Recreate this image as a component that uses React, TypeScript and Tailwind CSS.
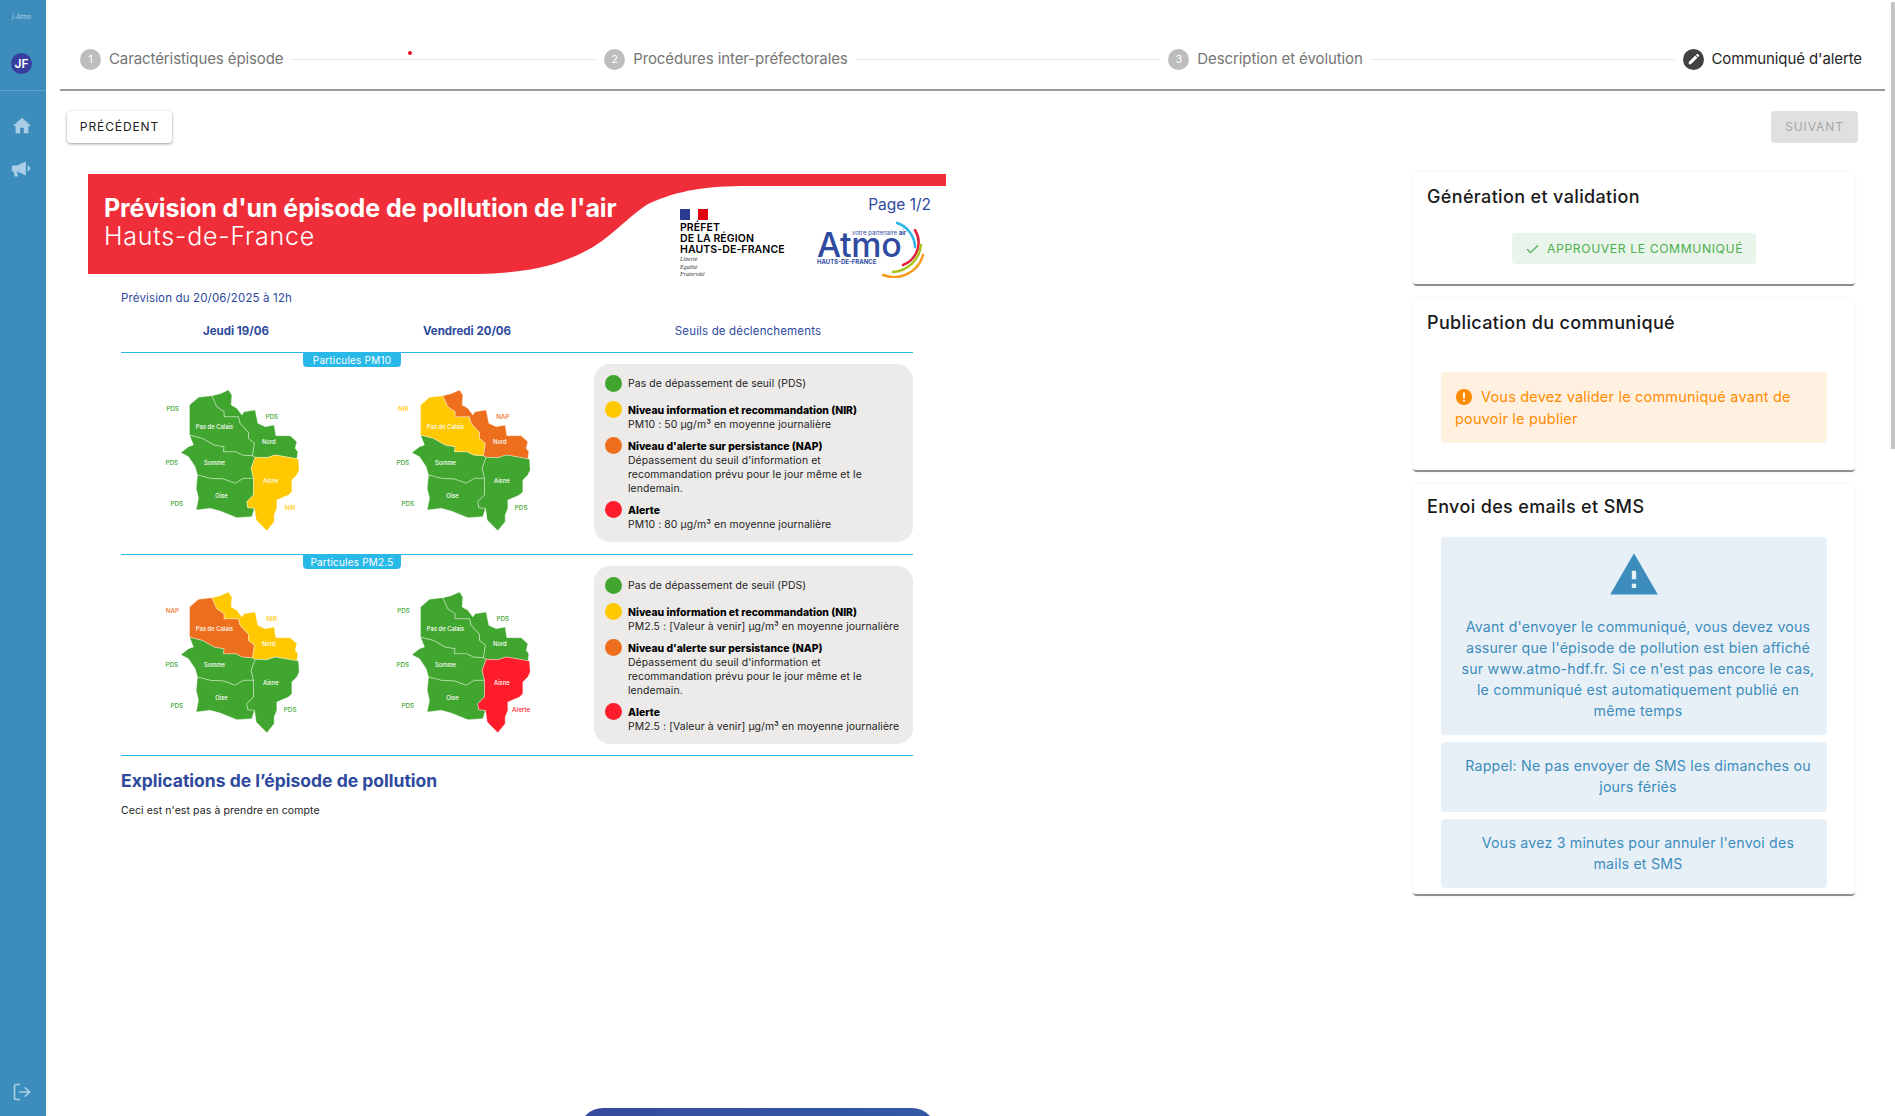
import { Check, LogOut } from 'lucide-react';

const GREEN = '#41a62f';
const YELLOW = '#ffc800';
const ORANGE = '#ed6e1c';
const RED = '#ff1d2b';

const REGIONS = {
  nord: 'M275 152 L300 146 L325 135 L335 150 L333 180 L350 190 L365 210 L372 200 L405 195 L413 235 L435 245 L462 240 L467 272 L510 272 L530 290 L525 310 L533 320 L530 342 L495 335 L465 330 L440 338 L405 337 L397 332 L403 295 L385 280 L385 262 L360 235 L355 215 L312 215 L312 200 L290 185 Z',
  pas: 'M208 180 L235 157 L275 152 L290 185 L312 200 L312 215 L355 215 L360 235 L385 262 L385 280 L403 295 L397 332 L367 330 L347 320 L310 320 L312 305 L282 300 L247 280 L208 270 Z',
  somme: 'M208 270 L247 280 L282 300 L312 305 L310 320 L347 320 L367 330 L397 332 L405 337 L393 370 L400 400 L370 400 L345 415 L310 402 L270 400 L232 390 L225 365 L205 335 L182 323 L205 305 L220 300 Z',
  oise: 'M232 390 L270 400 L310 402 L345 415 L370 400 L400 400 L400 450 L380 470 L383 488 L403 490 L395 515 L350 518 L300 498 L270 490 L228 495 L235 460 L228 430 Z',
  aisne: 'M405 337 L440 338 L465 330 L495 335 L535 342 L537 375 L530 390 L515 405 L515 440 L505 450 L470 465 L470 490 L462 510 L462 530 L440 557 L408 525 L403 490 L383 488 L380 470 L400 450 L400 400 L393 370 Z',
};

type MapProps = {
  nord: string;
  pas: string;
  somme: string;
  oise: string;
  aisne: string;
  labels: [string, string][];
};

const LABEL_POS: [number, number][] = [
  [157, 197],
  [455, 221],
  [155, 359],
  [170, 482],
  [510, 494],
];

const RegionMap = ({ nord, pas, somme, oise, aisne, labels }: MapProps) => (
  <svg viewBox="120 120 440 450" className="w-[147px] h-[150px] shrink-0">
    <g stroke="#ffffff" strokeOpacity="0.55" strokeWidth="2">
      <path d={REGIONS.somme} fill={somme} />
      <path d={REGIONS.oise} fill={oise} />
      <path d={REGIONS.pas} fill={pas} />
      <path d={REGIONS.nord} fill={nord} />
      <path d={REGIONS.aisne} fill={aisne} />
    </g>
    <g fill="#ffffff" fontSize="17.5" fontWeight="500" textAnchor="middle">
      <text x="283" y="251">Pas de Calais</text>
      <text x="446" y="296">Nord</text>
      <text x="283" y="359">Somme</text>
      <text x="304" y="458">Oise</text>
      <text x="452" y="413">Aisne</text>
    </g>
    <g fontSize="19" fontWeight="500" textAnchor="middle">
      {labels.map(([text, color], i) => (
        <text key={i} x={LABEL_POS[i][0]} y={LABEL_POS[i][1]} fill={color}>
          {text}
        </text>
      ))}
    </g>
  </svg>
);

const Dot = ({ color }: { color: string }) => (
  <span className="w-[17px] h-[17px] rounded-full shrink-0" style={{ background: color }} />
);

const Legend = ({ nir, alert }: { nir: string; alert: string }) => (
  <div className="w-[319px] h-[178px] rounded-[16px] bg-[#ecebea] pl-[11px] pt-[11px] text-[10.4px] leading-[14px] tracking-[0.1px] text-[#1c1c1c] flex flex-col">
    <div className="flex items-center gap-[6px] h-[17px]">
      <Dot color={GREEN} />
      <span>Pas de dépassement de seuil (PDS)</span>
    </div>
    <div className="flex gap-[6px] mt-[9px]">
      <Dot color={YELLOW} />
      <div className="pt-[3px]">
        <div className="font-extrabold text-black tracking-[0px]">Niveau information et recommandation (NIR)</div>
        <div>{nir}</div>
      </div>
    </div>
    <div className="flex gap-[6px] mt-[5px]">
      <Dot color={ORANGE} />
      <div className="pt-[3px]">
        <div className="font-extrabold text-black tracking-[0px]">Niveau d'alerte sur persistance (NAP)</div>
        <div>Dépassement du seuil d'information et</div>
        <div>recommandation prévu pour le jour même et le</div>
        <div>lendemain.</div>
      </div>
    </div>
    <div className="flex gap-[6px] mt-[5px]">
      <Dot color={RED} />
      <div className="pt-[3px]">
        <div className="font-extrabold text-black tracking-[0px]">Alerte</div>
        <div>{alert}</div>
      </div>
    </div>
  </div>
);

const Section = ({ title, maps, legend }: { title: string; maps: MapProps[]; legend: React.ReactNode }) => (
  <div className="relative h-[202px] border-t border-[#29b9e8]">
    <div className="absolute left-[182px] top-0 w-[98px] h-[14px] rounded-b-[4px] bg-[#29b9e8] text-white text-[10px] leading-[14px] text-center tracking-[0.2px]">
      {title}
    </div>
    <div className="flex items-start pt-[11px]">
      <div className="flex gap-[84px] pl-[39px] pt-[21px] w-[473px]">
        {maps.map((m, i) => (
          <RegionMap key={i} {...m} />
        ))}
      </div>
      {legend}
    </div>
  </div>
);

const Step = ({ n, label }: { n: number; label: string }) => (
  <div className="flex items-center gap-[8px] shrink-0">
    <span className="w-[21px] h-[21px] rounded-full bg-[#bdbdbd] text-white text-[11px] flex items-center justify-center">{n}</span>
    <span className="text-[15px] text-[#757575] tracking-[-0.1px]">{label}</span>
  </div>
);

const Connector = () => <div className="flex-1 h-px bg-[#e8e8e8] mx-[8px]" />;

const Card = ({ title, children, className }: { title: string; children: React.ReactNode; className: string }) => (
  <div className={`rounded-[4px] bg-white border-b-2 border-b-[#8f8f8f] shadow-[0_0_3px_rgba(0,0,0,0.08)] ${className}`}>
    <h2 className="pl-[14px] text-[18px] leading-[27px] font-medium text-[#1a1a1a] tracking-[0.35px]">{title}</h2>
    {children}
  </div>
);

const InfoBox = ({ className, children }: { className: string; children: React.ReactNode }) => (
  <div className={`w-[386px] ml-[28px] rounded-[4px] bg-[#e8f0f7] text-[#3c8dbc] text-[14.2px] leading-[21px] tracking-[0.2px] text-center pl-[20px] pr-[12px] ${className}`}>
    {children}
  </div>
);

export default function App() {
  return (
    <div className="relative flex w-full h-[1116px] overflow-hidden bg-white font-['Inter',sans-serif]">
      {/* Sidebar */}
      <aside className="w-[46px] shrink-0 bg-[#3c8dbc] flex flex-col text-[#a9cfe8]">
        <div className="h-[91px] border-b border-[#5ea2ca] flex flex-col items-center pr-[3px]">
          <span className="mt-[13px] text-[6px] leading-[8px] italic text-white/60">j-Atmo</span>
          <span className="mt-[32px] w-[21px] h-[21px] rounded-full bg-[#363f9e] text-white text-[12px] font-semibold flex items-center justify-center">JF</span>
        </div>
        <div className="flex flex-col items-center pt-[24px] pr-[3px] gap-[21px]">
          <svg viewBox="0 0 24 24" className="w-[22px] h-[22px]" fill="currentColor">
            <path d="M10 20v-6h4v6h5v-8h3L12 3 2 12h3v8z" />
          </svg>
          <svg viewBox="0 0 24 24" className="w-[21px] h-[21px]" fill="currentColor">
            <path d="M1 8.5h6L17 4v16L7 15.5H6.8L8 21H4.2L3 15.500H1z" />
            <path d="M19 8.500c1.800.6 3 1.900 3 3.500s-1.200 2.900-3 3.500z" />
          </svg>
        </div>
        <div className="mt-auto pb-[14px] pl-[12px]">
          <LogOut className="w-[20px] h-[20px]" strokeWidth={2} />
        </div>
      </aside>

      {/* Main */}
      <main className="flex-1 min-w-0 pl-[14px] pr-[10px]">
        <header className="relative h-[91px] pt-[29px] pl-[20px] pr-[23px] flex items-center border-b-2 border-b-[#9a9a9a]">
          <Step n={1} label="Caractéristiques épisode" />
          <Connector />
          <Step n={2} label="Procédures inter-préfectorales" />
          <Connector />
          <Step n={3} label="Description et évolution" />
          <Connector />
          <div className="flex items-center gap-[7px] shrink-0">
            <span className="w-[21px] h-[21px] rounded-full bg-[#424242] flex items-center justify-center">
              <svg viewBox="0 0 24 24" className="w-[14px] h-[14px]" fill="#ffffff">
                <path d="M3 17.250V21h3.750L17.810 9.940l-3.750-3.750L3 17.250zM20.710 7.040a1 1 0 0 0 0-1.410l-2.340-2.340a1 1 0 0 0-1.410 0l-1.830 1.830 3.750 3.750 1.830-1.830z" />
              </svg>
            </span>
            <span className="text-[15px] text-[#1f1f1f] tracking-[-0.1px]">Communiqué d'alerte</span>
          </div>
          <span className="absolute left-[348px] top-[51px] w-[4px] h-[4px] rounded-full bg-[#e8101c]" />
        </header>

        <div className="flex justify-between pl-[7px] pr-[27px] mt-[20px]">
          <button className="w-[105px] h-[32px] rounded-[4px] bg-white text-[12px] tracking-[0.9px] text-[#222] shadow-[0_1px_3px_rgba(0,0,0,0.4)]">
            PRÉCÉDENT
          </button>
          <button className="w-[87px] h-[32px] rounded-[4px] bg-[#e0e0e0] text-[12px] tracking-[0.9px] text-[#a6a6a6]">
            SUIVANT
          </button>
        </div>

        <div className="flex justify-between pl-[28px] pr-[30px]">
          {/* Document */}
          <article className="w-[858px] mt-[31px]">
            <div className="relative h-[100px]">
              <svg viewBox="0 0 858 100" className="absolute inset-0 w-full h-full">
                <path d="M0 0H858V12H660C620 12 590 16 560 30C530 50 520 70 480 85C450 97 420 99 390 100H0Z" fill="#f02e3a" />
              </svg>
              <div className="relative w-[540px] pl-[16px] pt-[19px] text-white">
                <div className="text-[25px] leading-[30px] font-bold tracking-[-0.1px] whitespace-nowrap">Prévision d'un épisode de pollution de l'air</div>
                <div className="text-[25px] leading-[27px] font-light tracking-[0.8px]">Hauts-de-France</div>
              </div>
              <span className="absolute right-[15px] top-[21px] text-[15.5px] leading-[20px] text-[#2e4a9e]">Page 1/2</span>
              <div className="absolute left-[592px] top-[35px] w-[110px] text-black">
                <div className="flex w-[28px] h-[11px]">
                  <span className="w-[10px] bg-[#2b3a8f]" />
                  <span className="w-[8px] bg-white" />
                  <span className="w-[10px] bg-[#e1000f]" />
                </div>
                <div className="mt-[3px] text-[10.5px] leading-[10.8px] font-semibold whitespace-nowrap tracking-[0.1px]">
                  <div>PRÉFET</div>
                  <div>DE LA RÉGION</div>
                  <div>HAUTS-DE-FRANCE</div>
                </div>
                <div className="mt-[1px] font-['Liberation_Serif',serif] italic text-[6px] leading-[7.2px] text-[#333]">
                  <div>Liberté</div>
                  <div>Égalité</div>
                  <div>Fraternité</div>
                </div>
              </div>
              <div className="absolute left-[729px] top-[46px] w-[112px] h-[58px] text-[#2f4b9f]">
                <span className="absolute left-[35px] top-[9px] text-[6px] leading-[7px] whitespace-nowrap">
                  votre partenaire <b>air</b>
                </span>
                <span className="absolute left-0 top-[13px] text-[34px] leading-[24px] font-medium tracking-[-0.3px]">Atmo</span>
                <span className="absolute left-0 top-[38px] text-[6px] leading-[7px] font-bold whitespace-nowrap">HAUTS-DE-FRANCE</span>
                <svg viewBox="0 0 48 58" className="absolute left-[63px] top-0 w-[48px] h-[58px]" fill="none" strokeWidth="2.500" strokeLinecap="round">
                  <path d="M17 3A26 26 0 0 1 35 27" stroke="#2db6e8" />
                  <path d="M35 10A24 24 0 0 1 23 45" stroke="#e2223c" />
                  <path d="M41 25A30 30 0 0 1 13 52" stroke="#a8c41c" />
                  <path d="M43 35A30 30 0 0 1 3 55" stroke="#f59a1b" />
                </svg>
              </div>
            </div>

            <div className="px-[33px] text-[#2e4a9e]">
              <p className="mt-[17px] text-[11.5px] leading-[14px] tracking-[0.15px]">Prévision du 20/06/2025 à 12h</p>
              <div className="flex h-[20px] mt-[16px] text-[11.5px] leading-[20px] text-center">
                <span className="w-[230px] font-bold">Jeudi 19/06</span>
                <span className="w-[232px] font-bold">Vendredi 20/06</span>
                <span className="w-[330px] tracking-[0.15px]">Seuils de déclenchements</span>
              </div>
              <div className="h-[11px]" />
              <Section
                title="Particules PM10"
                maps={[
                  { nord: GREEN, pas: GREEN, somme: GREEN, oise: GREEN, aisne: YELLOW, labels: [['PDS', GREEN], ['PDS', GREEN], ['PDS', GREEN], ['PDS', GREEN], ['NIR', YELLOW]] },
                  { nord: ORANGE, pas: YELLOW, somme: GREEN, oise: GREEN, aisne: GREEN, labels: [['NIR', YELLOW], ['NAP', ORANGE], ['PDS', GREEN], ['PDS', GREEN], ['PDS', GREEN]] },
                ]}
                legend={<Legend nir="PM10 : 50 µg/m³ en moyenne journalière" alert="PM10 : 80 µg/m³ en moyenne journalière" />}
              />
              <Section
                title="Particules PM2.5"
                maps={[
                  { nord: YELLOW, pas: ORANGE, somme: GREEN, oise: GREEN, aisne: GREEN, labels: [['NAP', ORANGE], ['NIR', YELLOW], ['PDS', GREEN], ['PDS', GREEN], ['PDS', GREEN]] },
                  { nord: GREEN, pas: GREEN, somme: GREEN, oise: GREEN, aisne: RED, labels: [['PDS', GREEN], ['PDS', GREEN], ['PDS', GREEN], ['PDS', GREEN], ['Alerte', RED]] },
                ]}
                legend={<Legend nir="PM2.5 : [Valeur à venir] µg/m³ en moyenne journalière" alert="PM2.5 : [Valeur à venir] µg/m³ en moyenne journalière" />}
              />
              <div className="border-t border-[#29b9e8] -mt-[1px]" />
              <h3 className="mt-[14px] text-[17.5px] leading-[22px] font-bold">Explications de l’épisode de pollution</h3>
              <p className="mt-[12px] text-[10.5px] leading-[14px] text-[#1c1c1c] tracking-[0.1px]">Ceci est n'est pas à prendre en compte</p>
            </div>
          </article>

          {/* Right column */}
          <div className="w-[442px] mt-[29px] flex flex-col gap-[12px]">
            <Card title="Génération et validation" className="h-[114px] pt-[11px]">
              <button className="flex items-center gap-[7px] ml-[99px] mt-[23px] w-[244px] h-[31px] pt-[1px] rounded-[4px] bg-[#e9f4ea] pl-[13px] text-[12.2px] tracking-[0.6px] whitespace-nowrap text-[#4caf50]">
                <Check className="w-[15px] h-[15px]" strokeWidth={2} />
                APPROUVER LE COMMUNIQUÉ
              </button>
            </Card>
            <Card title="Publication du communiqué" className="h-[174px] pt-[11px]">
              <div className="w-[386px] h-[71px] ml-[28px] mt-[36px] rounded-[4px] bg-[#fff0e0] px-[14px] pt-[14px] text-[14.5px] leading-[22px] tracking-[0.2px] text-[#ff8c00]">
                <svg viewBox="0 0 20 20" className="inline-block w-[18px] h-[18px] mr-[8px] -mt-[3px]">
                  <circle cx="10" cy="10" r="9" fill="#ff8c00" />
                  <path d="M9 5h2v6.500H9zM9 13h2v2H9z" fill="#ffffff" />
                </svg>
                Vous devez valider le communiqué avant de pouvoir le publier
              </div>
            </Card>
            <Card title="Envoi des emails et SMS" className="h-[412px] pt-[9px]">
              <InfoBox className="h-[198px] mt-[17px] pt-[12px]">
                <svg viewBox="0 0 24 24" className="w-[52px] h-[52px] mx-auto -translate-x-[4px]" fill="#3c8dbc">
                  <path d="M1 21h22L12 2 1 21zm12-3h-2v-2h2v2zm0-4h-2v-4h2v4z" />
                </svg>
                <p className="mt-[15px]">Avant d'envoyer le communiqué, vous devez vous assurer que l'épisode de pollution est bien affiché sur www.atmo-hdf.fr. Si ce n'est pas encore le cas, le communiqué est automatiquement publié en même temps</p>
              </InfoBox>
              <InfoBox className="h-[70px] mt-[7px] pt-[13px]">Rappel: Ne pas envoyer de SMS les dimanches ou jours fériés</InfoBox>
              <InfoBox className="h-[69px] mt-[7px] pt-[13px]">
                Vous avez 3 minutes pour annuler l'envoi des
                <br />
                mails et SMS
              </InfoBox>
            </Card>
          </div>
        </div>
      </main>

      {/* Overlays */}
      <div className="absolute right-0 top-[2px] w-[4px] h-[447px] bg-[#c4c4c4]" />
      <div className="absolute left-[579px] -bottom-[32px] w-[357px] h-[40px] rounded-t-[24px] bg-gradient-to-r from-[#364a9e] to-[#3059a3]" />
    </div>
  );
}
